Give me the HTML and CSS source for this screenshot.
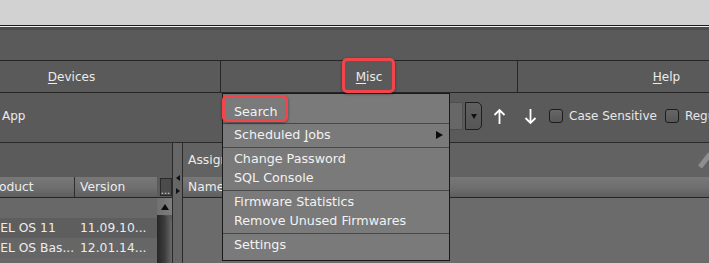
FILE: index.html
```html
<!DOCTYPE html>
<html lang="en">

<head>
    <meta charset="UTF-8" />
    <title>UMS Console</title>
    <link rel="stylesheet" href="styles.css">
</head>

<body>
    <div class="window">
        <div class="titlebar"></div>
        <div class="frame-top"></div>
        <div class="top-area"></div>

        <div class="menubar">
            <div class="menu-col"><u>D</u>evices</div>
            <div class="menu-col"><u>M</u>isc</div>
            <div class="menu-col"><u>H</u>elp</div>
        </div>

        <div class="toolbar">
            <span class="app-label">App</span>
            <div class="combo-field"></div>
            <div class="combo-button"><span class="down-tri"></span></div>
            <svg class="nav-arrow up" width="13" height="17" viewBox="0 0 13 17">
                <path d="M6.5 2 V16 M1.5 7 L6.5 2 L11.5 7" fill="none" stroke="#fff" stroke-width="1.8" />
            </svg>
            <svg class="nav-arrow down" width="13" height="17" viewBox="0 0 13 17">
                <path d="M6.5 1 V15 M1.5 10 L6.5 15 L11.5 10" fill="none" stroke="#fff" stroke-width="1.8" />
            </svg>
            <span class="checkbox first"></span>
            <span class="check-label">Case Sensitive</span>
            <span class="checkbox"></span>
            <span class="check-label">Regular Expression</span>
        </div>

        <div class="workspace">
            <div class="left-panel">
                <div class="panel-top"></div>
                <div class="table-head">
                    <div class="head-cells">
                        <div class="head-cell product">Product</div>
                        <div class="head-cell version">Version</div>
                    </div>
                    <div class="corner"><button class="dots">...</button></div>
                </div>
                <div class="table-body">
                    <div class="rows">
                        <div class="row blank"></div>
                        <div class="row dark">
                            <span class="cell product">IGEL OS 11</span>
                            <span class="cell version">11.09.10...</span>
                        </div>
                        <div class="row">
                            <span class="cell product">IGEL OS Bas...</span>
                            <span class="cell version">12.01.14...</span>
                        </div>
                    </div>
                    <div class="scrollbar">
                        <div class="scroll-up"><span class="up-tri"></span></div>
                        <div class="scroll-thumb"></div>
                    </div>
                </div>
            </div>

            <div class="splitter">
                <span class="tri-left"></span>
                <span class="tri-right"></span>
            </div>

            <div class="right-panel">
                <div class="panel-top assigned">
                    <span>Assigned Objects</span>
                    <svg class="pencil" width="16" height="20" viewBox="0 0 16 20">
                        <path d="M3 17 L13 4" stroke="#8e8e8e" stroke-width="5" fill="none" />
                    </svg>
                </div>
                <div class="table-head">
                    <div class="head-cell name">Name</div>
                </div>
                <div class="right-body"></div>
            </div>
        </div>

        <!-- open Misc menu -->
        <div class="popup">
            <div class="popup-item first">Search</div>
            <div class="popup-sep"></div>
            <div class="popup-item">Scheduled <u>J</u>obs <span class="sub-tri"></span></div>
            <div class="popup-sep"></div>
            <div class="popup-item">Change Password</div>
            <div class="popup-item">SQL Console</div>
            <div class="popup-sep"></div>
            <div class="popup-item">Firmware Statistics</div>
            <div class="popup-item">Remove Unused Firmwares</div>
            <div class="popup-sep"></div>
            <div class="popup-item">Settings</div>
        </div>

        <div class="mark mark-misc"></div>
        <div class="mark mark-search"></div>
    </div>
</body>

</html>
```

FILE: styles.css
```css
body {
    margin: 0;
    background: #5a5a5a;
    font-family: 'DejaVu Sans', sans-serif;
    font-size: 12px;
    color: #ececec;
    overflow: hidden;
}

.window {
    position: relative;
    width: 709px;
    height: 263px;
    overflow: hidden;
}

.titlebar {
    height: 25px;
    background: #d2d2d2;
    border-bottom: 1px solid #1c1c1c;
}

.frame-top {
    height: 3px;
    border-top: 1px solid #efefef;
    background: #4d4d4d;
}

.top-area {
    height: 30px;
    background: #5a5a5a;
}

.menubar {
    display: grid;
    grid-template-columns: 298px 297px 297px;
    margin-left: -77px;
    height: 31px;
    border-top: 1px solid #262626;
    border-bottom: 1px solid #262626;
}

.menu-col {
    display: flex;
    align-items: center;
    justify-content: center;
    border-right: 1px solid #262626;
    box-sizing: border-box;
}

.menu-col:last-child {
    border-right: none;
}

u {
    text-decoration-thickness: 1px;
    text-underline-offset: 2px;
}

/* toolbar */

.toolbar {
    display: flex;
    align-items: center;
    height: 46px;
    padding-bottom: 3px;
    border-bottom: 1px solid #2a2a2a;
    white-space: nowrap;
}

.toolbar > * {
    flex-shrink: 0;
}

.app-label {
    margin-left: 2px;
    width: 24px;
}

.combo-field {
    margin-left: 264px;
    width: 173px;
    height: 28px;
    box-sizing: border-box;
    border: 1px solid #505050;
    background: #676767;
}

.combo-button {
    display: flex;
    align-items: center;
    justify-content: center;
    margin-left: 2px;
    width: 17px;
    height: 28px;
    box-sizing: border-box;
    border: 1px solid #1e1e1e;
    border-radius: 0 5px 5px 0;
    background: linear-gradient(#606060, #565656);
}

.down-tri {
    border-left: 3px solid transparent;
    border-right: 3px solid transparent;
    border-top: 5px solid #111;
}

.nav-arrow.up {
    margin-left: 11px;
}

.nav-arrow.down {
    margin-left: 18px;
}

.checkbox {
    width: 14px;
    height: 14px;
    box-sizing: border-box;
    border: 1px solid #1c1c1c;
    border-radius: 3px;
    background: linear-gradient(#666, #575757);
    margin-left: 8px;
}

.checkbox.first {
    margin-left: 12px;
}

.check-label {
    margin-left: 6px;
    color: #e6e6e6;
}

/* lower panels */

.workspace {
    display: flex;
    height: 120px;
}

.left-panel {
    width: 173px;
    flex-shrink: 0;
    box-sizing: border-box;
    border-right: 1px solid #2a2a2a;
    background: #5b5b5b;
}

.panel-top {
    height: 34px;
}

.table-head {
    display: flex;
    height: 20px;
    border-bottom: 1px solid #262626;
}

.head-cells {
    display: flex;
    width: 174px;
    margin-left: -17px;
    flex-shrink: 0;
}

.head-cell {
    display: flex;
    align-items: center;
    flex-shrink: 0;
    box-sizing: border-box;
    background: linear-gradient(#787878, #6e6e6e 55%, #5e5e5e);
    white-space: nowrap;
    font-size: 12.3px;
}

.head-cell.product {
    width: 92px;
    padding-left: 4px;
    border-right: 1px solid #2e2e2e;
}

.head-cell.version {
    width: 82px;
    padding-left: 5px;
}

.corner {
    flex: 1;
    display: flex;
    align-items: center;
    justify-content: center;
}

.dots {
    width: 12px;
    height: 18px;
    padding: 0;
    border: 1px solid #2a2a2a;
    background: #4b4b4b;
    color: #dcdcdc;
    font-family: 'DejaVu Sans', sans-serif;
    font-size: 10px;
    line-height: 24px;
    margin-left: 2px;
}

.table-body {
    display: flex;
    height: 65px;
}

.rows {
    width: 157px;
    flex-shrink: 0;
    background: #686868;
    overflow: hidden;
}

.row {
    display: flex;
    height: 20px;
    align-items: center;
    white-space: nowrap;
    font-size: 12.3px;
    background: #666;
}

.row.blank {
    background: #686868;
}

.row.dark {
    background: #5e5e5e;
}

.cell.product {
    width: 93px;
    margin-left: -13px;
    flex-shrink: 0;
}

.scrollbar {
    width: 15px;
    display: flex;
    flex-direction: column;
    background: #5a5a5a;
}

.scroll-up {
    height: 17px;
    display: flex;
    justify-content: center;
    align-items: center;
    background: linear-gradient(to right, #707070, #7e7e7e);
}

.up-tri {
    border-left: 4px solid transparent;
    border-right: 4px solid transparent;
    border-bottom: 6px solid #0c0c0c;
}

.scroll-thumb {
    flex: 1;
    background: linear-gradient(to right, #262626, #3c3c3c 50%, #6a6a6a);
    border-top-right-radius: 9px;
}

.splitter {
    width: 10px;
    flex-shrink: 0;
    box-sizing: border-box;
    border-right: 1px solid #2a2a2a;
    background: #666;
    display: flex;
    flex-direction: column;
    align-items: center;
    padding-top: 32px;
    gap: 7px;
}

.tri-left {
    border-top: 3px solid transparent;
    border-bottom: 3px solid transparent;
    border-right: 4px solid #111;
}

.tri-right {
    border-top: 3px solid transparent;
    border-bottom: 3px solid transparent;
    border-left: 4px solid #111;
}

.right-panel {
    flex: 1;
    min-width: 0;
    background: #626262;
}

.assigned {
    display: flex;
    align-items: center;
    justify-content: space-between;
    padding-left: 5px;
    white-space: nowrap;
    font-size: 12.3px;
}

.pencil {
    margin-right: -4px;
    flex-shrink: 0;
}

.head-cell.name {
    flex: 1;
    padding-left: 5px;
}

.right-body {
    height: 65px;
    background: #6b6b6b;
}

/* popup menu */

.popup {
    position: absolute;
    left: 222px;
    top: 93px;
    width: 228px;
    height: 168px;
    box-sizing: border-box;
    border: 1px solid #1a1a1a;
    background: #7a7a7a;
    padding-top: 7.5px;
    color: #f2f2f2;
    font-size: 12.7px;
}

.popup-item {
    position: relative;
    height: 19.4px;
    line-height: 19.4px;
    padding-left: 11px;
    white-space: nowrap;
}

.popup-sep {
    height: 1px;
    background: #484848;
    margin: 2.4px 0 0.8px;
}

.sub-tri {
    position: absolute;
    right: 6px;
    top: 6px;
    border-top: 4px solid transparent;
    border-bottom: 4px solid transparent;
    border-left: 7px solid #0c0c0c;
}

/* red annotation boxes */

.mark {
    position: absolute;
    box-sizing: border-box;
    border: 3px solid #f2454b;
    border-radius: 5px;
    box-shadow: 0 1px 3px rgba(0, 0, 0, 0.45);
}

.mark-misc {
    left: 342px;
    top: 58px;
    width: 53px;
    height: 35px;
}

.mark-search {
    left: 222px;
    top: 95px;
    width: 66px;
    height: 27px;
}
```
